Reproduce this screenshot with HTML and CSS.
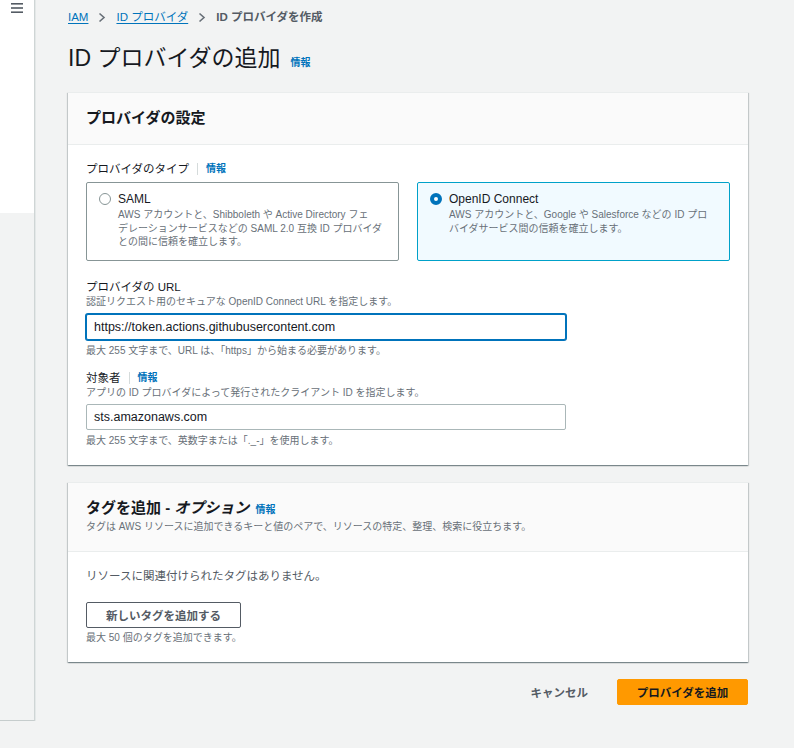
FILE: index.html
```html
<!DOCTYPE html>
<html lang="ja">
<head>
<meta charset="utf-8">
<title>ID プロバイダの追加</title>
<link rel="stylesheet" href="styles.css">
</head>
<body>
<aside class="sidebar">
  <div class="sidebar-top">
    <svg class="hamburger" width="12" height="11" viewBox="0 0 12 11"><rect x="0" y="0" width="12" height="1.6" fill="#545b64"/><rect x="0" y="4.2" width="12" height="1.6" fill="#545b64"/><rect x="0" y="8.4" width="12" height="1.6" fill="#545b64"/></svg>
  </div>
  <div class="sidebar-rest"></div>
</aside>
<main class="main">
  <nav class="crumbs">
    <a class="crumb-link">IAM</a>
    <svg class="crumb-sep" width="8" height="11" viewBox="0 0 8 11"><polyline points="1.5,1.5 6,5.5 1.5,9.5" fill="none" stroke="#687078" stroke-width="1.6"/></svg>
    <a class="crumb-link">ID プロバイダ</a>
    <svg class="crumb-sep" width="8" height="11" viewBox="0 0 8 11"><polyline points="1.5,1.5 6,5.5 1.5,9.5" fill="none" stroke="#687078" stroke-width="1.6"/></svg>
    <span class="crumb-current">ID プロバイダを作成</span>
  </nav>
  <div class="title-row">
    <h1>ID プロバイダの追加</h1>
    <a class="info">情報</a>
  </div>

  <section class="card">
    <div class="card-header">
      <h2 class="card-title">プロバイダの設定</h2>
    </div>
    <div class="card-body">
      <div class="label">プロバイダのタイプ<span class="sep"></span><a class="info">情報</a></div>
      <div class="tiles">
        <div class="tile">
          <span class="radio"></span>
          <div>
            <div class="tile-title">SAML</div>
            <div class="tile-desc">AWS アカウントと、Shibboleth や Active Directory フェ<br>デレーションサービスなどの SAML 2.0 互換 ID プロバイダ<br>との間に信頼を確立します。</div>
          </div>
        </div>
        <div class="tile selected">
          <span class="radio"></span>
          <div>
            <div class="tile-title">OpenID Connect</div>
            <div class="tile-desc">AWS アカウントと、Google や Salesforce などの ID プロ<br>バイダサービス間の信頼を確立します。</div>
          </div>
        </div>
      </div>

      <div class="field first">
        <div class="label">プロバイダの URL</div>
        <div class="desc">認証リクエスト用のセキュアな OpenID Connect URL を指定します。</div>
        <div class="input focused">https://token.actions.githubusercontent.com</div>
        <div class="desc hint">最大 255 文字まで、URL は、「https」から始まる必要があります。</div>
      </div>

      <div class="field">
        <div class="label">対象者<span class="sep"></span><a class="info">情報</a></div>
        <div class="desc">アプリの ID プロバイダによって発行されたクライアント ID を指定します。</div>
        <div class="input">sts.amazonaws.com</div>
        <div class="desc hint">最大 255 文字まで、英数字または「._-」を使用します。</div>
      </div>
    </div>
  </section>

  <section class="card card2">
    <div class="card-header">
      <h2 class="card-title">タグを追加 - <em>オプション</em> <a class="info">情報</a></h2>
      <div class="desc header-desc">タグは AWS リソースに追加できるキーと値のペアで、リソースの特定、整理、検索に役立ちます。</div>
    </div>
    <div class="card-body">
      <div class="empty">リソースに関連付けられたタグはありません。</div>
      <button class="btn-normal">新しいタグを追加する</button>
      <div class="desc hint2">最大 50 個のタグを追加できます。</div>
    </div>
  </section>

  <div class="footer">
    <button class="btn-link">キャンセル</button>
    <button class="btn-primary">プロバイダを追加</button>
  </div>
</main>
</body>
</html>
```
FILE: styles.css
```css
* { box-sizing: border-box; }
html, body { margin: 0; padding: 0; }
body {
  width: 794px;
  height: 748px;
  overflow: hidden;
  background: #f2f3f3;
  color: #16191f;
  font-family: "Liberation Sans", "Noto Sans CJK JP", sans-serif;
  display: flex;
  align-items: flex-start;
}
.sidebar {
  width: 35px;
  height: 721px;
  display: flex;
  flex-direction: column;
  border-right: 1px solid #cfd5d5;
  border-bottom: 1px solid #c6cdcd;
  box-shadow: 1px 0 0 #e4e8e8;
  flex: none;
}
.sidebar-top {
  height: 213px;
  background: #fff;
  padding: 3px 0 0 11px;
}
.hamburger { display: block; }
.sidebar-rest { flex: 1; background: #f2f3f3; }

.main {
  flex: 1;
  padding: 8px 46px 0 33px;
}
.crumbs {
  display: flex;
  align-items: center;
  height: 18px;
  font-size: 11.5px;
  line-height: 18px;
}
.crumb-link { color: #0073bb; text-decoration: underline; text-underline-offset: 2px; }
.crumb-sep { margin: 0 10px; display: block; }
.crumb-current { color: #545b64; font-weight: 700; }

.title-row {
  display: flex;
  align-items: baseline;
  margin-top: 17px;
  height: 30px;
}
h1 {
  margin: 0;
  font-size: 23px;
  font-weight: 400;
  line-height: 30px;
  color: #16191f;
}
.info {
  color: #0073bb;
  font-size: 10px;
  font-weight: 700;
  font-style: normal;
}
.title-row .info { margin-left: 10px; }

.card {
  background: #fff;
  margin-top: 19px;
  border-top: 1px solid #eaeded;
  box-shadow: 0 1px 1px 0 rgba(0, 28, 36, 0.3), 1px 1px 1px 0 rgba(0, 28, 36, 0.15), -1px 1px 1px 0 rgba(0, 28, 36, 0.15);
}
.card2 { margin-top: 17px; }
.card-header {
  background: #fafafa;
  border-bottom: 1px solid #eaeded;
  padding: 15px 18px 16px;
}
.card2 .card-header { padding: 15px 18px 17px; }
.card-title {
  margin: 0;
  font-size: 15px;
  font-weight: 700;
  line-height: 20px;
}
.card-title em { font-style: italic; }
.card-title .info { margin-left: 2px; }
.card-body { padding: 16px 18px 17px; }
.card2 .card-body { padding: 16px 18px 17px; }

.label {
  display: flex;
  align-items: center;
  font-size: 11.5px;
  line-height: 16px;
}
.label .sep {
  width: 1px;
  height: 12px;
  background: #d5dbdb;
  margin: 0 8px;
}
.desc {
  font-size: 10px;
  line-height: 14px;
  color: #687078;
}

.tiles {
  display: grid;
  grid-template-columns: 313px 313px;
  gap: 18px;
  margin-top: 5px;
}
.tile {
  display: flex;
  gap: 7px;
  border: 1px solid #879596;
  border-radius: 2px;
  padding: 9px 12px 11px 12px;
  background: #fff;
}
.tile.selected {
  border-color: #00a1c9;
  background: #f1faff;
}
.radio {
  flex: none;
  width: 12px;
  height: 12px;
  margin-top: 1px;
  border-radius: 50%;
  border: 1.5px solid #879596;
  background: #fff;
}
.tile.selected .radio { border: 4px solid #0073bb; }
.tile-title {
  font-size: 12px;
  line-height: 14px;
}
.tile-desc {
  margin-top: 2px;
  font-size: 10px;
  line-height: 13.5px;
  color: #687078;
}

.field { margin-top: 12px; }
.field.first { margin-top: 18px; }
.input {
  margin-top: 5px;
  width: 480px;
  height: 26px;
  border: 1px solid #aab7b8;
  border-radius: 2px;
  padding: 0 7px;
  font-size: 12.5px;
  line-height: 24px;
  color: #16191f;
  background: #fff;
}
.field:not(.first) .input { margin-top: 4px; }
.input.focused {
  border-color: #0073bb;
  box-shadow: 0 0 0 1px #0073bb;
}
.hint { margin-top: 4px; }

.header-desc { margin-top: 0; }
.empty {
  font-size: 11.5px;
  line-height: 16px;
  color: #545b64;
}
.btn-normal {
  display: block;
  margin-top: 18px;
  height: 26px;
  padding: 0 19px;
  border: 1px solid #545b64;
  border-radius: 2px;
  background: #fff;
  color: #545b64;
  font-family: inherit;
  font-size: 11.5px;
  font-weight: 700;
}
.hint2 { margin-top: 3px; }

.footer {
  display: flex;
  justify-content: flex-end;
  gap: 9px;
  margin-top: 17px;
}
.btn-link {
  height: 26px;
  padding: 0 20px;
  border: none;
  background: transparent;
  color: #545b64;
  font-family: inherit;
  font-size: 11.5px;
  font-weight: 700;
}
.btn-primary {
  height: 26px;
  width: 131px;
  padding: 0;
  border: 1px solid #ff9900;
  border-radius: 2px;
  background: #ff9900;
  color: #16191f;
  font-family: inherit;
  font-size: 11.5px;
  font-weight: 700;
}
```
